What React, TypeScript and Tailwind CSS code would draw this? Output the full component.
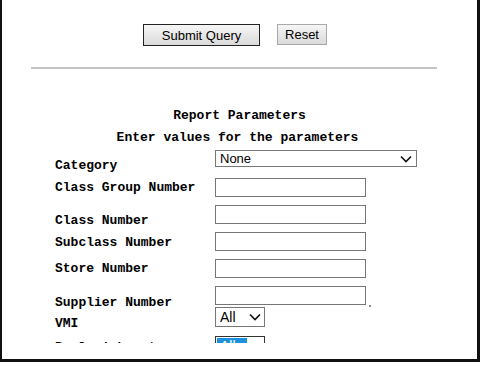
import React from 'react'

const mono = { fontFamily: '"Liberation Mono", "Courier New", monospace' }
const sans = { fontFamily: '"Liberation Sans", Arial, sans-serif' }

function Chevron({ className }: { className?: string }) {
  return (
    <svg viewBox="0 0 12 8" className={className} fill="none" stroke="#111" strokeWidth="1.6">
      <path d="M1 1.5 L6 6.5 L11 1.5" />
    </svg>
  )
}

function TextBox({ dot }: { dot?: boolean }) {
  return (
    <div className="flex items-end">
      <div className="w-[151px] h-[19px] border border-[#767676] bg-white" />
      {dot && <div className="w-[2px] h-[2px] bg-[#888] ml-[3px] mb-[-2px]" />}
    </div>
  )
}

interface Row {
  label: string
  h: string
  pt: string
  control: React.ReactNode
}

const rows: Row[] = [
  {
    label: 'Category',
    h: 'h-[28px]',
    pt: 'pt-[8px]',
    control: (
      <div
        className="w-[202px] h-[17px] border border-[#767676] flex items-center justify-between pl-[4px] pr-[4px] text-[13px] text-black"
        style={sans}
      >
        <span>None</span>
        <Chevron className="w-[12px] h-[8px]" />
      </div>
    ),
  },
  { label: 'Class Group Number', h: 'h-[27px]', pt: 'pt-[2px]', control: <TextBox /> },
  { label: 'Class Number', h: 'h-[27px]', pt: 'pt-[8px]', control: <TextBox /> },
  { label: 'Subclass Number', h: 'h-[27px]', pt: 'pt-[3px]', control: <TextBox /> },
  { label: 'Store Number', h: 'h-[27px]', pt: 'pt-[2px]', control: <TextBox /> },
  { label: 'Supplier Number', h: 'h-[21px]', pt: 'pt-[9px]', control: <TextBox dot /> },
  {
    label: 'VMI',
    h: 'h-[29px]',
    pt: 'pt-[9px]',
    control: (
      <div
        className="w-[50px] h-[20px] border border-[#767676] flex items-center justify-between pl-[4px] pr-[3px] text-[14px] text-black"
        style={sans}
      >
        <span>All</span>
        <Chevron className="w-[12px] h-[8px]" />
      </div>
    ),
  },
  {
    label: 'Replenishment',
    h: 'h-[30px]',
    pt: 'pt-[4px]',
    control: (
      <div
        className="w-[50px] h-[20px] border border-[#333] flex items-start pt-[1px] pl-[1px] text-[14px]"
        style={sans}
      >
        <span className="w-[30px] h-[17px] bg-[#1e90e0] text-white pl-[3px] leading-[17px]">All</span>
        <Chevron className="w-[12px] h-[8px] ml-[4px] mt-[6px]" />
      </div>
    ),
  },
]

export default function App() {
  return (
    <div className="w-[480px] h-[362px] bg-white border-l-2 border-r-[3px] border-b-[3px] border-[#111]">
      <div className="h-[343px] overflow-hidden">
        <div className="flex pt-[24px] pl-[141px] gap-[17px]" style={sans}>
          <button className="w-[117px] h-[22px] border border-[#222] bg-gradient-to-b from-[#f6f6f6] to-[#dadada] text-[13px] text-black leading-none">
            Submit Query
          </button>
          <button className="w-[50px] h-[21px] border border-[#a8a8a8] bg-gradient-to-b from-[#f6f6f6] to-[#dadada] text-[13px] text-black leading-none">
            Reset
          </button>
        </div>
        <div className="ml-[29px] mt-[21px] w-[406px] h-[2px] bg-[#c4c4c4]" />
        <div className="mt-[39px] text-center text-[13px] leading-[15px] font-bold text-black" style={mono}>
          Report Parameters
        </div>
        <div className="mt-[7px] text-center text-[13px] leading-[15px] font-bold text-black pr-[4px]" style={mono}>
          Enter values for the parameters
        </div>
        <div className="mt-[5px] pl-[53px]">
          {rows.map((r) => (
            <div key={r.label} className={`flex ${r.h}`}>
              <div
                className={`w-[160px] shrink-0 text-[13px] leading-[15px] font-bold text-black ${r.pt}`}
                style={mono}
              >
                {r.label}
              </div>
              <div>{r.control}</div>
            </div>
          ))}
        </div>
      </div>
    </div>
  )
}
